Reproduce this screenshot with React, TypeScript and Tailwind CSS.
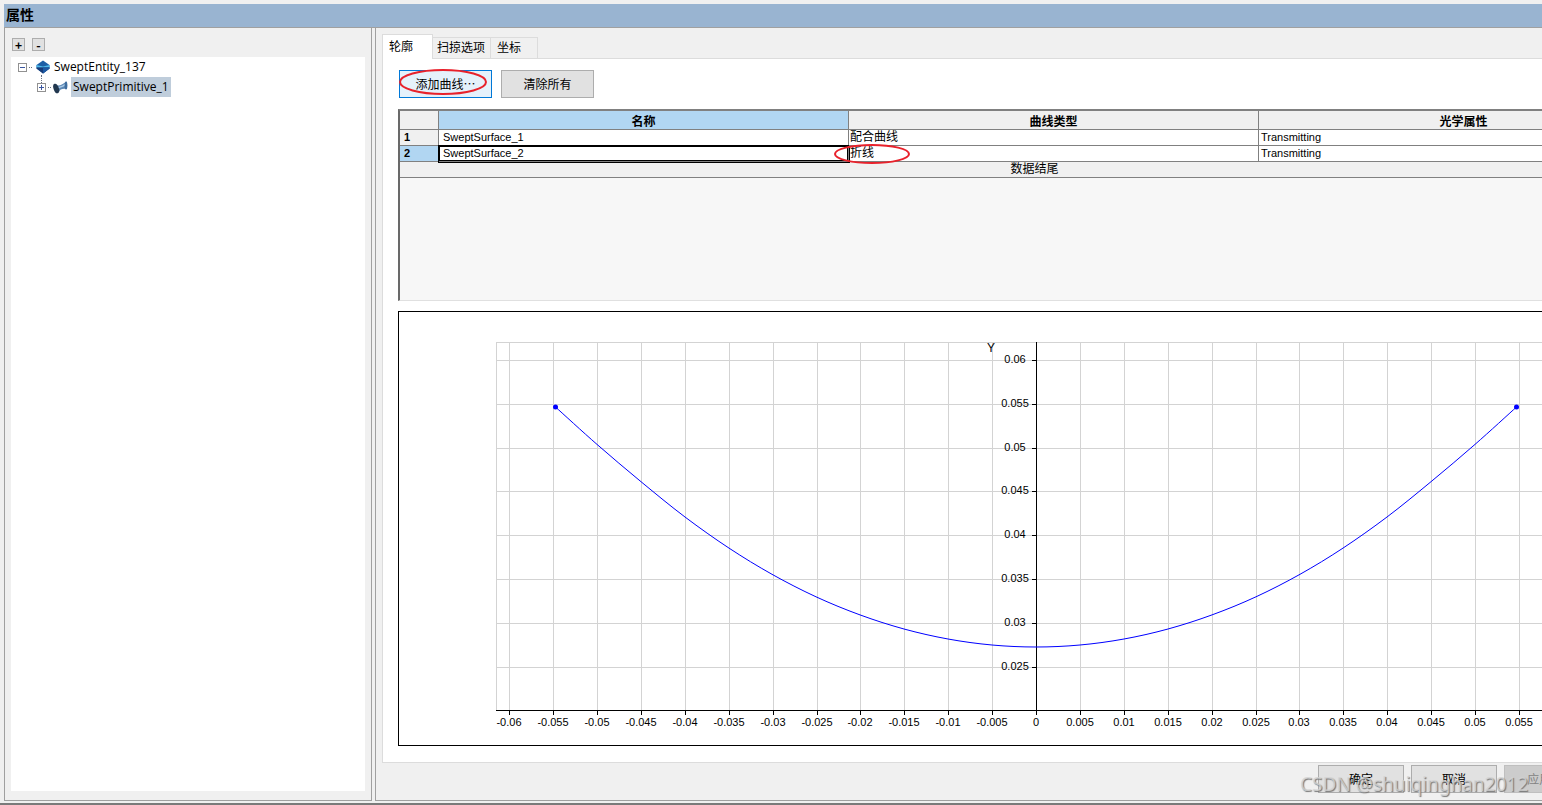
import { useState } from "react";
import clsx from "clsx";

const tabs = [
  { label: "轮廓", className: "w-[51px] pl-1.5" },
  { label: "扫掠选项", className: "w-[58px] pl-1" },
  { label: "坐标", className: "w-[47px] pl-1.5" },
];

const rows = [
  { name: "SweptSurface_1", type: "配合曲线", optics: "Transmitting" },
  { name: "SweptSurface_2", type: "折线", optics: "Transmitting" },
];

// plot area, in chart pixels
const ORIGIN_X = 637;
const STEP = 43.9;
const LEFT = 97;
const RIGHT = 1177;
const TOP = 30;
const BOTTOM = 398;

const xTicks = Array.from({ length: 25 }, (_, i) => i - 12);
const yTicks = Array.from({ length: 8 }, (_, i) => i);

// distance from the Y axis -> height on the plot
const half = [
  [0, 335],
  [44, 333],
  [88, 327],
  [132, 317],
  [176, 302.9],
  [220, 284.8],
  [264, 262.3],
  [307, 236.1],
  [351, 205],
  [395, 169.7],
  [439, 132.4],
  [480.5, 95],
];

const points = [
  ...half.slice(1).reverse().map(([d, y]) => [ORIGIN_X - d, y]),
  ...half.map(([d, y]) => [ORIGIN_X + d, y]),
];

function smoothPath(pts: number[][]) {
  let d = `M${pts[0][0]} ${pts[0][1]}`;
  for (let i = 0; i < pts.length - 1; i++) {
    const p0 = pts[i - 1] ?? pts[i];
    const p1 = pts[i];
    const p2 = pts[i + 1];
    const p3 = pts[i + 2] ?? p2;
    d += `C${p1[0] + (p2[0] - p0[0]) / 6} ${p1[1] + (p2[1] - p0[1]) / 6} ${
      p2[0] - (p3[0] - p1[0]) / 6
    } ${p2[1] - (p3[1] - p1[1]) / 6} ${p2[0]} ${p2[1]}`;
  }
  return d;
}

function ProfileChart() {
  return (
    <svg
      width="1270"
      height="433"
      className="block max-w-none font-['Liberation_Sans',sans-serif] text-[11px]"
      role="img"
      aria-label="Profile"
    >
      <g stroke="#d3d3d3" shapeRendering="crispEdges">
        {xTicks.map((t) => {
          const x = Math.round(ORIGIN_X + t * STEP) + 0.5;
          return <line key={t} x1={x} x2={x} y1={TOP} y2={BOTTOM} />;
        })}
        {yTicks.map((t) => {
          const y = Math.round(355 - t * STEP) + 0.5;
          return <line key={t} x1={LEFT} x2={RIGHT} y1={y} y2={y} />;
        })}
        <path d={`M${LEFT}.5 ${BOTTOM}V${TOP}.5H${RIGHT}`} fill="none" />
      </g>
      <g stroke="#000" shapeRendering="crispEdges">
        <line x1={LEFT} x2={RIGHT} y1={BOTTOM + 0.5} y2={BOTTOM + 0.5} />
        <line x1={ORIGIN_X + 0.5} x2={ORIGIN_X + 0.5} y1={TOP} y2={BOTTOM} />
        {xTicks.map((t) => {
          const x = Math.round(ORIGIN_X + t * STEP) + 0.5;
          return <line key={t} x1={x} x2={x} y1={BOTTOM} y2={BOTTOM + 5} />;
        })}
        {yTicks.map((t) => {
          const y = Math.round(355 - t * STEP) + 0.5;
          return <line key={t} x1={ORIGIN_X - 4} x2={ORIGIN_X} y1={y} y2={y} />;
        })}
      </g>
      <g textAnchor="middle" fill="#000">
        {xTicks.map((t) => (
          <text key={t} x={Math.round(ORIGIN_X + t * STEP)} y={414}>
            {String((t * 5) / 1000)}
          </text>
        ))}
        {yTicks.map((t) => (
          <text key={t} x={616} y={Math.round(358 - t * STEP)}>
            {String((25 + t * 5) / 1000)}
          </text>
        ))}
        <text x={592} y={40} className="text-[12px]">
          Y
        </text>
      </g>
      <path d={smoothPath(points)} fill="none" stroke="#00f" />
      <circle cx={points[0][0]} cy={points[0][1]} r="2.5" fill="#00f" />
      <circle cx={points[points.length - 1][0]} cy={points[points.length - 1][1]} r="2.5" fill="#00f" />
    </svg>
  );
}

function Expander({ open }: { open: boolean }) {
  return (
    <svg width="9" height="9" shapeRendering="crispEdges">
      <rect x="0.5" y="0.5" width="8" height="8" fill="#fff" stroke="#919191" />
      <path d={open ? "M2 4.5H7" : "M2 4.5H7M4.5 2V7"} stroke="#3a56a0" />
    </svg>
  );
}

function DiamondIcon() {
  return (
    <svg width="14" height="14" viewBox="0 0 14 14">
      <path d="M7 0.5L13.5 5V8.5L7 13.5L0.5 8.5V5Z" fill="#1c5fa6" />
      <path d="M0.5 5L7 6.5L13.5 5V7.5H0.5Z" fill="#4fb9ea" />
      <path d="M0.5 7.5H13.5V8.5L7 13.5L0.5 8.5Z" fill="#173b78" />
      <path d="M7 8V13.5L13.5 8.5V7.5Z" fill="#1c5aa5" />
    </svg>
  );
}

function HornIcon() {
  return (
    <svg width="15" height="13" viewBox="0 0 15 13">
      <path d="M2 3C5 6 9 4 13.5 0.5L14 8C10 7 7 8 5.5 11Z" fill="#5c87b4" />
      <path d="M5 6C8 5 11 4 13 2V4C11 6 8 6 5 8Z" fill="#a9c9e6" />
      <ellipse cx="13" cy="4.5" rx="1.4" ry="4" fill="#3f6d9e" />
      <ellipse cx="3.2" cy="7.5" rx="2.6" ry="5" transform="rotate(-20 3.2 7.5)" fill="#22384f" />
    </svg>
  );
}

function Tree() {
  return (
    <ul className="flex-1 bg-white font-['Open_Sans',sans-serif] text-[12px] leading-5">
      <li>
        <div className="flex h-5 items-center pl-[7px]">
          <Expander open />
          <span className="mr-1 ml-0.5 w-[3px] border-t border-dotted border-gray-500" />
          <DiamondIcon />
          <span className="pl-1">SweptEntity_137</span>
        </div>
        <ul>
          <li className="flex h-5 items-center pl-[26px]">
            <span className="relative flex">
              <span className="absolute bottom-full left-1 h-2 border-l border-dotted border-gray-500" />
              <Expander open={false} />
            </span>
            <span className="mr-0.5 ml-0.5 w-[3px] border-t border-dotted border-gray-500" />
            <HornIcon />
            <span className="ml-[3px] bg-[#bfcddb] px-0.5">SweptPrimitive_1</span>
          </li>
        </ul>
      </li>
    </ul>
  );
}

function SurfaceTable() {
  return (
    <div className="h-48 overflow-hidden border-t-2 border-b border-l-2 border-t-[#808080] border-b-[#e0e0e0] border-l-[#696969] bg-[#f7f7f7]">
      <table className="w-[1269px] table-fixed border-separate border-spacing-0 text-[12px] leading-[15px] [&_td]:border-b [&_td]:border-[#808080] [&_th]:border-r [&_th]:border-b [&_th]:border-[#808080]">
        <colgroup>
          <col className="w-[39px]" />
          <col className="w-[410px]" />
          <col className="w-[410px]" />
          <col className="w-[410px]" />
        </colgroup>
        <thead>
          <tr className="h-[19px]">
            <th className="bg-[#f0f0f0] p-0" />
            <th className="bg-[#b1d6f2] p-0">名称</th>
            <th className="bg-[#f0f0f0] p-0">曲线类型</th>
            <th className="bg-[#f0f0f0] p-0">光学属性</th>
          </tr>
        </thead>
        <tbody className="font-['Liberation_Sans','Noto_Sans_CJK_SC',sans-serif]">
          {rows.map((row, i) => {
            const active = i === 1;
            return (
              <tr key={row.name} className="h-4 bg-white">
                <th
                  scope="row"
                  className={clsx("p-0 pl-1 text-left text-[11px]", active ? "bg-[#b1d6f2]" : "bg-[#f0f0f0]")}
                >
                  {i + 1}
                </th>
                <td
                  className={clsx(
                    "border-r p-0 pl-1 text-[11px]",
                    active && "shadow-[inset_0_0_0_1px_#000] outline outline-black",
                  )}
                >
                  {row.name}
                </td>
                <td className="relative border-r p-0 pl-px">
                  {row.type}
                  {active && (
                    <svg className="absolute -top-1 -left-4" width="78" height="22">
                      <ellipse cx="39" cy="12" rx="37" ry="9" fill="none" stroke="#e8212b" strokeWidth="2" />
                    </svg>
                  )}
                </td>
                <td className="border-r p-0 pl-0.5 text-[11px]">{row.optics}</td>
              </tr>
            );
          })}
          <tr className="h-4 bg-[#f0f0f0]">
            <td colSpan={4} className="p-0 text-center">
              数据结尾
            </td>
          </tr>
        </tbody>
      </table>
    </div>
  );
}

export default function App() {
  const [tab, setTab] = useState(0);

  return (
    <div className="flex h-screen min-h-[805px] flex-col overflow-hidden bg-[#f0f0f0] pt-1 pl-1 font-['Noto_Sans_CJK_SC',sans-serif] text-[12px] text-black">
      <h1 className="h-6 shrink-0 border-b border-[#a0a0a0] bg-[#99b4d1] pl-0.5 text-[14px] leading-5 font-bold">
        属性
      </h1>

      <div className="flex min-h-0 flex-1 gap-[3px]">
        <aside className="flex w-[368px] shrink-0 flex-col border-x border-b border-[#a0a0a0] pr-1.5 pb-[9px] pl-1.5">
          <div className="flex h-[29px] gap-[7px] pt-2.5 pl-px">
            <button className="h-[13px] w-[13px] border border-[#adadad] bg-[#e1e1e1] text-[12px] leading-[11px] font-bold">
              +
            </button>
            <button className="h-[13px] w-[13px] border border-[#adadad] bg-[#e1e1e1] text-[12px] leading-[11px] font-bold">
              -
            </button>
          </div>
          <Tree />
        </aside>

        <main className="flex min-w-0 flex-1 flex-col border-b border-l border-[#a0a0a0] pl-1.5">
          <div role="tablist" className="flex h-[30px] shrink-0 items-end">
            {tabs.map(({ label, className }, i) => (
              <button
                key={label}
                role="tab"
                aria-selected={tab === i}
                onClick={() => setTab(i)}
                className={clsx(
                  "border-t border-r border-[#dcdcdc] pb-0.5 text-left",
                  className,
                  i === 0 && "border-l",
                  i === tab ? "relative z-10 -mb-px h-[25px] bg-white" : "h-[21px]",
                )}
              >
                {label}
              </button>
            ))}
          </div>

          <section className="flex min-h-0 flex-1 flex-col border-y border-l border-[#dcdcdc] bg-white pt-[11px] pl-[15px]">
            <div className="flex gap-[9px]">
              <button className="relative ml-px h-7 w-[93px] border border-[#0078d7] bg-[#e5f1fb]">
                添加曲线⋯
                <svg className="absolute -top-1 -left-1" width="92" height="30">
                  <ellipse cx="47" cy="15" rx="43" ry="12" fill="none" stroke="#e8212b" strokeWidth="2" />
                </svg>
              </button>
              <button className="h-7 w-[93px] border border-[#adadad] bg-[#e1e1e1]">清除所有</button>
            </div>
            <div className="mt-[11px]">
              <SurfaceTable />
            </div>
            <div className="mt-2.5 shrink-0 overflow-hidden border-y border-l border-black">
              <ProfileChart />
            </div>
          </section>

          <footer className="relative flex h-[37px] shrink-0 justify-end gap-[7px] overflow-hidden pt-0.5">
            <button className="h-7 w-[86px] border border-[#adadad] bg-[#e1e1e1]">确定</button>
            <button className="h-7 w-[86px] border border-[#adadad] bg-[#e1e1e1]">取消</button>
            <button
              disabled
              className="-mr-12 h-7 w-[86px] border border-[#bfbfbf] bg-[#cccccc] text-[#838383]"
            >
              应用(A)
            </button>
            <span className="pointer-events-none absolute right-3.5 bottom-1 font-['Noto_Sans',sans-serif] text-[19px] leading-6 whitespace-nowrap text-[#d4d4d4]/80 [text-shadow:1px_1px_1px_#777]">
              CSDN @shuiqinghan2012
            </span>
          </footer>
        </main>
      </div>

      <div className="-ml-1 h-1 shrink-0 border-b-2 border-[#7a7a7a]" />
    </div>
  );
}
